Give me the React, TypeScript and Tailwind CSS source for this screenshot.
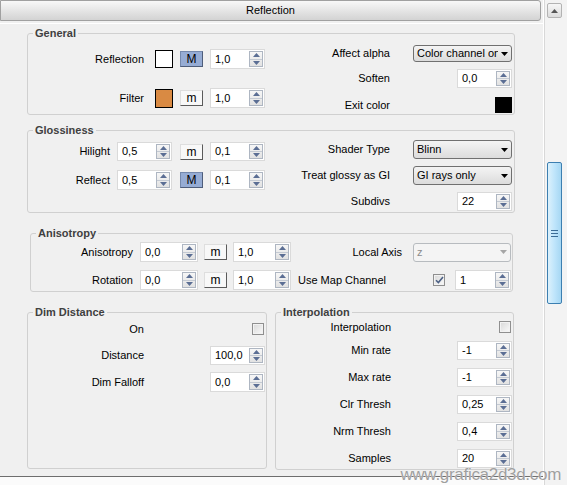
import React from "react";

// 3ds Max / V-Ray "Reflection" rollout

function Spinner({ value, cls }: { value: string; cls: string }) {
  return (
    <div className={`flex items-stretch border border-[#dadada] bg-white ${cls}`}>
      <span className="flex flex-1 items-center pl-[4px] leading-none">{value}</span>
      <div className="my-[1px] mr-[1px] flex w-[14px] flex-col border border-[#aeb6c2] bg-linear-to-b from-[#f7f7f7] to-[#e2e2e2]">
        <div className="flex flex-1 items-center justify-center border-b border-[#c4cad3]">
          <svg width="7" height="4" viewBox="0 0 7 4">
            <path d="M3.5 0L7 4H0Z" fill="#5b6e94" />
          </svg>
        </div>
        <div className="flex flex-1 items-center justify-center">
          <svg width="7" height="4" viewBox="0 0 7 4">
            <path d="M0 0H7L3.5 4Z" fill="#5b6e94" />
          </svg>
        </div>
      </div>
    </div>
  );
}

function Combo({ text, cls, disabled }: { text: string; cls: string; disabled?: boolean }) {
  return (
    <div
      className={`flex items-center rounded-[3px] border ${
        disabled
          ? "border-[#b7bbbf] bg-[#f4f4f4] text-[#8c8c8c]"
          : "border-[#707070] bg-linear-to-b from-[#f4f4f4] to-[#dcdcdc] text-black"
      } ${cls}`}
    >
      <span className="min-w-0 flex-1 overflow-hidden whitespace-nowrap pl-[3px]">{text}</span>
      <svg className="ml-[3px] mr-[3px] shrink-0" width="7" height="4" viewBox="0 0 7 4">
        <path d="M0 0H7L3.5 4Z" fill={disabled ? "#a6a6a6" : "#000"} />
      </svg>
    </div>
  );
}

function MBtn({ label, active }: { label: string; active?: boolean }) {
  return (
    <div
      className={`flex h-[16px] w-[23px] shrink-0 items-center justify-center border text-[12px] leading-none ${
        active
          ? "border-[#7589ad] border-r-[#4e5d7a] border-b-[#4e5d7a] bg-[#96acd4]"
          : "border-[#dedede] border-r-[#5a5a5a] border-b-[#5a5a5a] bg-[#f8f8f8]"
      }`}
    >
      {label}
    </div>
  );
}

function Swatch({ cls }: { cls: string }) {
  return <div className={`shrink-0 border border-black ${cls}`} />;
}

function Check({ checked }: { checked?: boolean }) {
  return (
    <div className="flex h-[12px] w-[12px] shrink-0 items-center justify-center border border-[#8f8f8f] bg-linear-to-br from-[#d8d8d8] to-[#fafafa] shadow-[inset_0_0_0_1px_#f2f2f2]">
      {checked && (
        <svg width="9" height="8" viewBox="0 0 9 8">
          <path d="M1 4.2L3.4 6.6L8 1" stroke="#4d6185" strokeWidth="1.6" fill="none" />
        </svg>
      )}
    </div>
  );
}

function Group({ title, cls, children }: { title: string; cls: string; children: React.ReactNode }) {
  return (
    <div className={`relative shrink-0 rounded-[3px] border border-[#d0d0d0] ${cls}`}>
      <span className="absolute left-[5px] top-[-8px] bg-[#f0f0f0] px-[2px] font-bold leading-[14px] text-[#404040]">
        {title}
      </span>
      {children}
    </div>
  );
}

// right-hand column row: label ending at a fixed point, control right aligned
function RRow({ label, cls, children }: { label: string; cls: string; children: React.ReactNode }) {
  return (
    <div className={`flex items-center ${cls}`}>
      <span className="flex-1 text-right">{label}</span>
      <div className="flex w-[122px] justify-end">{children}</div>
    </div>
  );
}

export default function App() {
  return (
    <div className="relative flex h-[485px] w-[567px] overflow-hidden bg-[#f0f0f0] font-['Liberation_Sans',Arial,sans-serif] text-[11px] text-black">
      <div className="flex w-[543px] shrink-0 flex-col">
        <div className="flex h-[21px] w-[541px] shrink-0 items-center justify-center rounded-r-[3px] border border-[#a0a0a0] bg-linear-to-b from-[#f8f8f8] to-[#d3d3d3]">
          Reflection
        </div>

        <div className="mt-[2px] flex h-[453px] shrink-0 flex-col border-t border-white pl-[27px]">
          {/* General */}
          <Group title="General" cls="mt-[9px] flex h-[82px] w-[488px]">
            <div className="flex w-[242px] flex-col">
              <div className="mt-[15px] flex h-[20px] items-center">
                <span className="w-[116px] text-right">Reflection</span>
                <Swatch cls="ml-[11px] h-[18px] w-[18px] bg-white" />
                <div className="ml-[7px]"><MBtn label="M" active /></div>
                <Spinner value="1,0" cls="ml-[7px] h-[20px] w-[55px]" />
              </div>
              <div className="mt-[19px] flex h-[20px] items-center">
                <span className="w-[116px] text-right">Filter</span>
                <Swatch cls="ml-[11px] h-[19px] w-[18px] bg-[#d98a43]" />
                <div className="ml-[7px]"><MBtn label="m" /></div>
                <Spinner value="1,0" cls="ml-[7px] h-[20px] w-[55px]" />
              </div>
            </div>
            <div className="flex flex-1 flex-col pr-[2px]">
              <RRow label="Affect alpha" cls="mt-[11px] h-[17px]">
                <Combo text="Color channel only" cls="h-[17px] w-[99px]" />
              </RRow>
              <RRow label="Soften" cls="mt-[7px] h-[19px]">
                <Spinner value="0,0" cls="h-[19px] w-[55px]" />
              </RRow>
              <RRow label="Exit color" cls="mt-[9px] h-[16px]">
                <Swatch cls="h-[16px] w-[17px] bg-black" />
              </RRow>
            </div>
          </Group>

          {/* Glossiness */}
          <Group title="Glossiness" cls="mt-[15px] flex h-[83px] w-[488px]">
            <div className="flex w-[242px] flex-col">
              <div className="mt-[11px] flex h-[19px] items-center">
                <span className="w-[82px] text-right">Hilight</span>
                <Spinner value="0,5" cls="ml-[7px] h-[19px] w-[55px]" />
                <div className="ml-[8px]"><MBtn label="m" /></div>
                <Spinner value="0,1" cls="ml-[7px] h-[19px] w-[55px]" />
              </div>
              <div className="mt-[9px] flex h-[20px] items-center">
                <span className="w-[82px] text-right">Reflect</span>
                <Spinner value="0,5" cls="ml-[7px] h-[20px] w-[55px]" />
                <div className="ml-[8px]"><MBtn label="M" active /></div>
                <Spinner value="0,1" cls="ml-[7px] h-[20px] w-[55px]" />
              </div>
            </div>
            <div className="flex flex-1 flex-col pr-[2px]">
              <RRow label="Shader Type" cls="mt-[9px] h-[19px]">
                <Combo text="Blinn" cls="h-[19px] w-[99px]" />
              </RRow>
              <RRow label="Treat glossy as GI" cls="mt-[7px] h-[19px]">
                <Combo text="GI rays only" cls="h-[19px] w-[99px]" />
              </RRow>
              <RRow label="Subdivs" cls="mt-[7px] h-[19px]">
                <Spinner value="22" cls="h-[19px] w-[55px]" />
              </RRow>
            </div>
          </Group>

          {/* Anisotropy */}
          <Group title="Anisotropy" cls="ml-[3px] mt-[20px] flex h-[59px] w-[483px] flex-col pr-[1px]">
            <div className="mt-[8px] flex h-[20px] items-center">
              <span className="w-[102px] text-right">Anisotropy</span>
              <Spinner value="0,0" cls="ml-[7px] h-[20px] w-[58px]" />
              <div className="ml-[6px]"><MBtn label="m" /></div>
              <Spinner value="1,0" cls="ml-[6px] h-[20px] w-[58px]" />
              <span className="flex-1 text-right">Local Axis</span>
              <Combo text="z" disabled cls="ml-[11px] h-[19px] w-[98px]" />
            </div>
            <div className="mt-[8px] flex h-[20px] items-center">
              <span className="w-[102px] text-right">Rotation</span>
              <Spinner value="0,0" cls="ml-[7px] h-[20px] w-[58px]" />
              <div className="ml-[6px]"><MBtn label="m" /></div>
              <Spinner value="1,0" cls="ml-[6px] h-[20px] w-[58px]" />
              <span className="ml-[7px] flex-1">Use Map Channel</span>
              <Check checked />
              <Spinner value="1" cls="ml-[10px] h-[20px] w-[56px]" />
            </div>
          </Group>

          <div className="mt-[20px] flex">
            {/* Dim Distance */}
            <Group title="Dim Distance" cls="flex h-[157px] w-[240px] flex-col pr-[1px]">
              <div className="mt-[6px] flex h-[20px] items-center">
                <span className="w-[116px] text-right">On</span>
                <span className="flex-1" />
                <div className="mr-[1px]"><Check /></div>
              </div>
              <div className="mt-[7px] flex h-[19px] items-center">
                <span className="w-[116px] text-right">Distance</span>
                <span className="flex-1" />
                <Spinner value="100,0" cls="h-[19px] w-[55px]" />
              </div>
              <div className="mt-[7px] flex h-[20px] items-center">
                <span className="w-[116px] text-right">Dim Falloff</span>
                <span className="flex-1" />
                <Spinner value="0,0" cls="h-[20px] w-[55px]" />
              </div>
            </Group>

            {/* Interpolation */}
            <Group title="Interpolation" cls="ml-[8px] flex h-[158px] w-[239px] flex-col pr-[1px]">
              <div className="mt-[4px] flex h-[20px] items-center">
                <span className="w-[115px] text-right">Interpolation</span>
                <span className="flex-1" />
                <div className="mr-[1px]"><Check /></div>
              </div>
              {[
                ["Min rate", "-1", "mt-[4px]"],
                ["Max rate", "-1", "mt-[8px]"],
                ["Clr Thresh", "0,25", "mt-[8px]"],
                ["Nrm Thresh", "0,4", "mt-[8px]"],
                ["Samples", "20", "mt-[8px]"],
              ].map(([label, value, mt]) => (
                <div key={label} className={`flex h-[19px] items-center ${mt}`}>
                  <span className="w-[115px] text-right">{label}</span>
                  <span className="flex-1" />
                  <Spinner value={value} cls="h-[19px] w-[55px]" />
                </div>
              ))}
            </Group>
          </div>
        </div>

        {/* next rollout, cut off */}
        <div className="h-[9px] w-[544px] shrink-0 border-r border-t border-[#6e6e6e] bg-[#fbfbfb]" />
      </div>

      {/* scrollbar */}
      <div className="flex w-[24px] shrink-0 flex-col bg-[#f3f3f3] pl-[4px] pt-[3px] shadow-[inset_1px_0_0_#ffffff,inset_2px_0_0_#d8d8d8]">
        <div className="flex h-[15px] w-[15px] items-center justify-center rounded-[2px] border border-[#b3b3b3] bg-linear-to-b from-[#f7f7f7] to-[#dcdcdc]">
          <svg width="7" height="4" viewBox="0 0 7 4">
            <path d="M3.5 0L7 4H0Z" fill="#555" />
          </svg>
        </div>
        <div className="mt-[144px] flex h-[142px] w-[15px] items-center justify-center rounded-[2px] border border-[#3c7fb1] bg-linear-to-r from-[#dcf1fc] via-[#bfe5fb] to-[#a6d7f3]">
          <svg width="7" height="7" viewBox="0 0 7 7">
            <path d="M0 0.5H7M0 3.5H7M0 6.5H7" stroke="#3b6c95" strokeWidth="1" />
          </svg>
        </div>
      </div>

      <span className="absolute bottom-[2px] right-[6px] text-[17px] leading-none tracking-[-0.3px] text-[#a0a0a0] [text-shadow:0_0_1px_#ffffff]">
        www.grafica2d3d.com
      </span>
    </div>
  );
}
